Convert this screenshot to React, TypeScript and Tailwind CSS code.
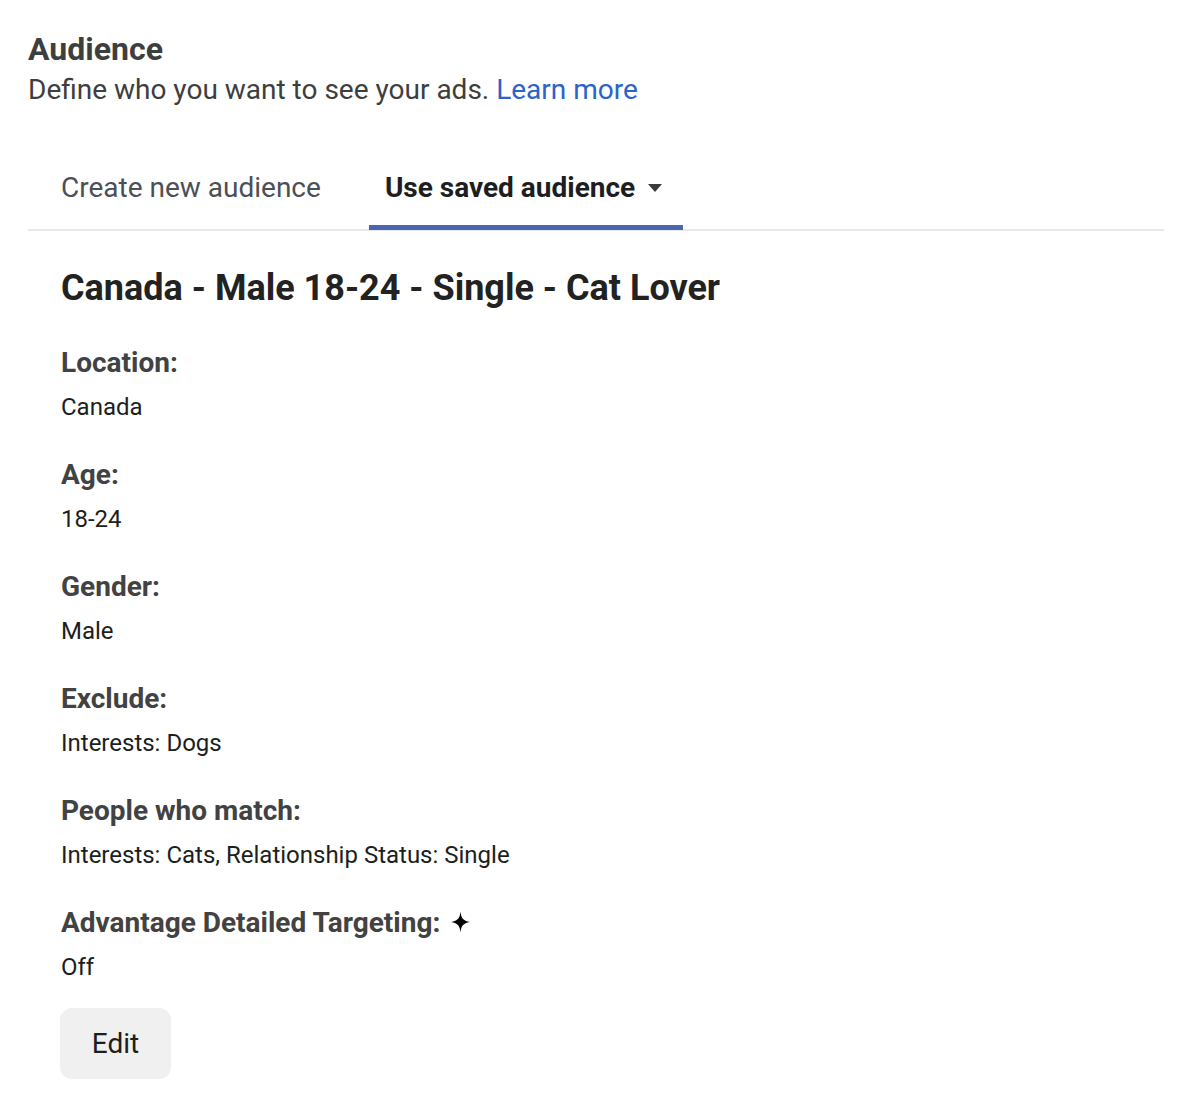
const sections = [
    { label: "Location:", value: "Canada" },
    { label: "Age:", value: "18-24" },
    { label: "Gender:", value: "Male" },
    { label: "Exclude:", value: "Interests: Dogs" },
    { label: "People who match:", value: "Interests: Cats, Relationship Status: Single" },
];

const Sparkle: React.FC = () => (
    <svg width="19" height="22" viewBox="0 0 20 22" className="-mt-[3px] ml-[11px] inline-block">
        <path d="M10 0 C10.8 7 12.5 9.6 20 11 C12.5 12.4 10.8 15 10 22 C9.2 15 7.5 12.4 0 11 C7.5 9.6 9.2 7 10 0 Z" fill="#050505" />
    </svg>
);

const App: React.FC = () => {
    return (
        <div className="min-h-[1118px] w-[1188px] bg-white font-['Roboto',sans-serif]">
            <div className="px-[28px] pt-[30px]">
                <h1 className="text-[32px] font-bold leading-[38px] text-[#3e3e3e]">Audience</h1>
                <p className="text-[28px] leading-[44px] text-[#3e3e3e]">
                    Define who you want to see your ads. <span className="text-[#2b63c9]">Learn more</span>
                </p>

                <div className="mt-[56px] flex w-[1136px] border-b-2 border-[#e8e8e8] pl-[17px]">
                    <button className="px-[16px] pb-[25px] pt-[4px] text-[28px] leading-[32px] text-[#4b4f56]">
                        Create new audience
                    </button>
                    <button className="relative ml-[32px] flex items-center pb-[25px] pl-[16px] pr-[21px] pt-[4px] text-[28px] font-bold leading-[32px] text-[#1c1e21]">
                        Use saved audience
                        <svg width="14" height="9" viewBox="0 0 14 9" className="ml-[13px]">
                            <path d="M0 0 H14 L7 8 Z" fill="#3b3b3b" />
                        </svg>
                        <span className="absolute -bottom-[1px] left-0 right-0 h-[5px] bg-[#4a67ad]" />
                    </button>
                </div>

                <div className="pl-[33px]">
                    <h2 className="mt-[36px] text-[36px] font-bold leading-[42px] text-[#222222]">
                        Canada - Male 18-24 - Single - Cat Lover
                    </h2>

                    <div className="mt-[38px] flex flex-col gap-[36px]">
                        {sections.map((s) => (
                            <div key={s.label}>
                                <p className="text-[28px] font-bold leading-[32px] text-[#424242]">{s.label}</p>
                                <p className="mt-[12px] text-[24px] leading-[32px] text-[#1c1e21]">{s.value}</p>
                            </div>
                        ))}
                        <div>
                            <p className="flex items-center text-[28px] font-bold leading-[32px] text-[#424242]">
                                Advantage Detailed Targeting: <Sparkle />
                            </p>
                            <p className="mt-[12px] text-[24px] leading-[32px] text-[#1c1e21]">Off</p>
                        </div>
                    </div>

                    <button className="-ml-px mt-[25px] h-[71px] w-[111px] rounded-[12px] bg-[#f0f0f0] text-[28px] text-[#1c1e21]">
                        Edit
                    </button>
                </div>
            </div>
        </div>
    );
};

export default App;
